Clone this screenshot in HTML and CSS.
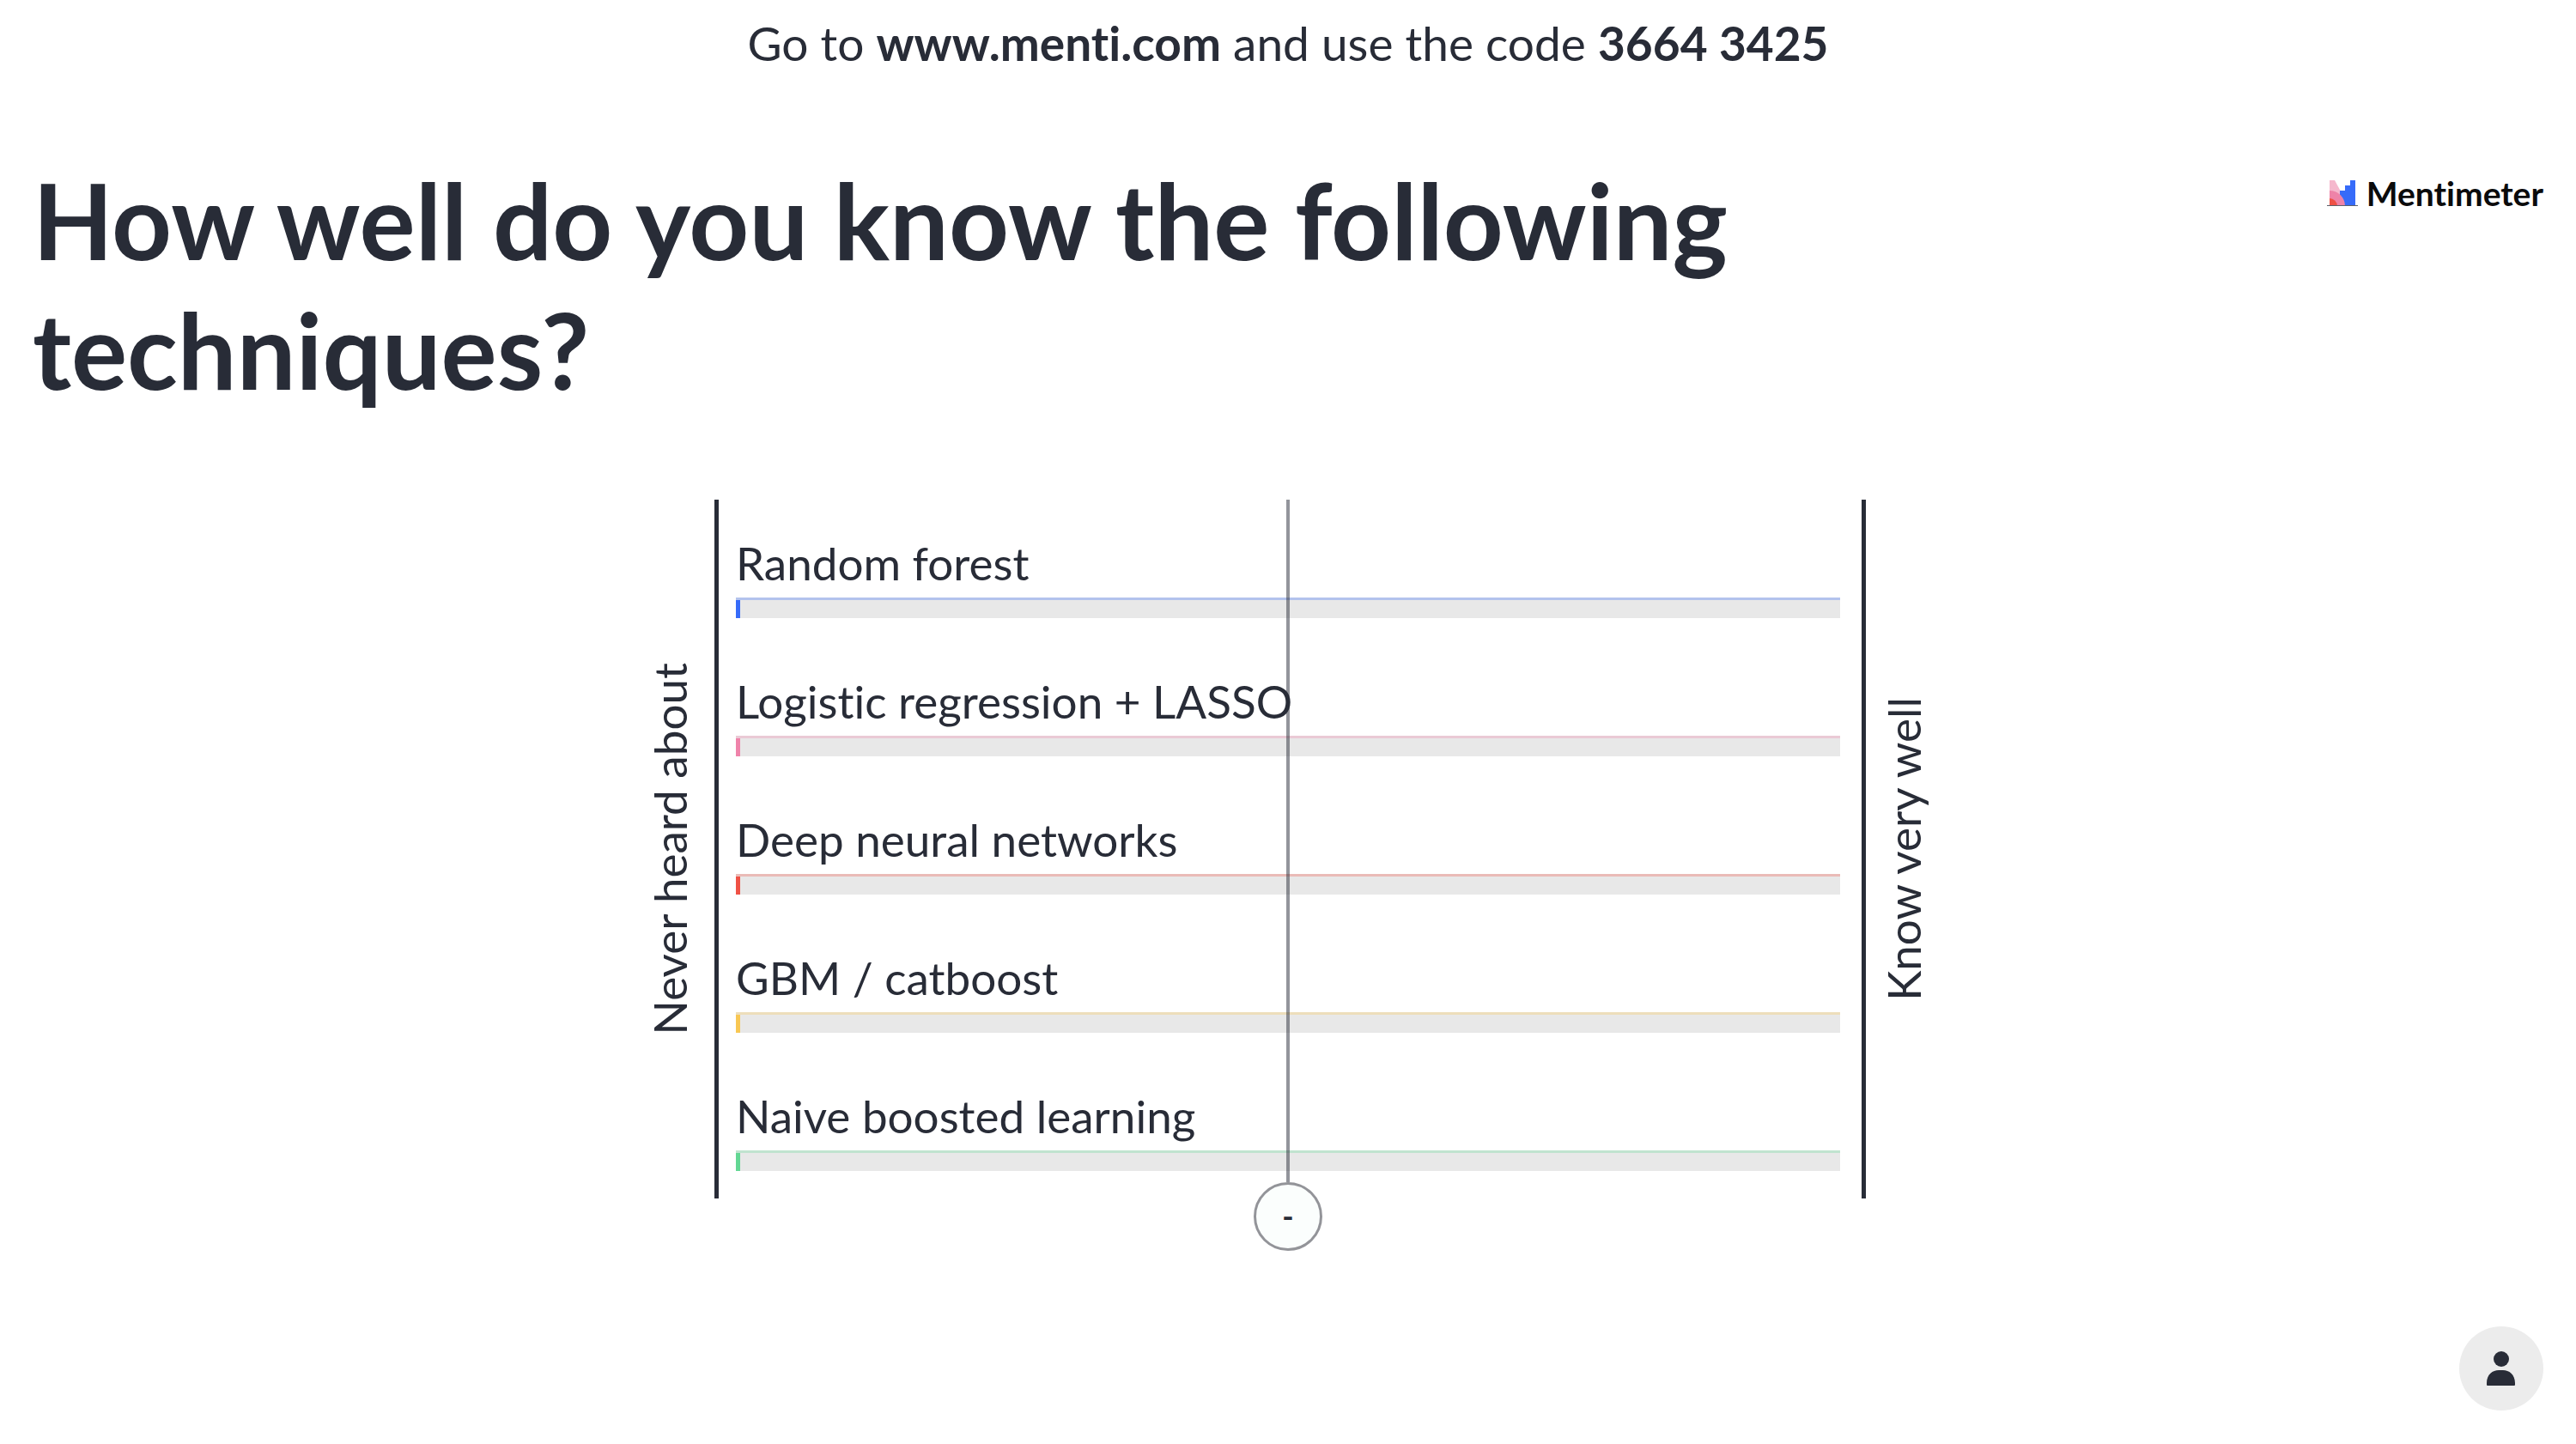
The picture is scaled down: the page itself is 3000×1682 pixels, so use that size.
FILE: index.html
```html
<!DOCTYPE html>
<html lang="en">
<head>
<meta charset="utf-8">
<meta name="viewport" content="width=device-width, initial-scale=1">
<title>Mentimeter</title>
<link rel="stylesheet" href="styles.css">
</head>
<body>
<p class="join">Go to <a class="join-link" href="https://www.menti.com">www.menti.com</a> and use the code <strong>3664 3425</strong></p>

<header class="header">
  <h1 class="question">How well do you know the following techniques?</h1>
  <div class="brand">
    <svg class="brand-mark" viewBox="0 0 36 31" aria-hidden="true">
      <path fill="#f5b8cd" d="M3 0h6l7 13v17H3z"/>
      <path fill="#366bf9" d="M15 12h6V6h6V0h6v30H15z"/>
      <path fill="#ee83a8" d="M3 12a18 18 0 0 1 18 18H3z"/>
      <path fill="#ef5145" d="M3 21a9 9 0 0 1 9 9H3z"/>
      <path fill="#5d6069" d="M0 29h36v1H0z"/>
    </svg>
    <span class="brand-name">Mentimeter</span>
  </div>
</header>

<main class="chart">
  <div class="axis axis-low">Never heard about</div>
  <div class="plot">
    <ul class="rows">
      <li class="row blue"><span class="label">Random forest</span><div class="bar"></div></li>
      <li class="row pink"><span class="label">Logistic regression + LASSO</span><div class="bar"></div></li>
      <li class="row red"><span class="label">Deep neural networks</span><div class="bar"></div></li>
      <li class="row yellow"><span class="label">GBM / catboost</span><div class="bar"></div></li>
      <li class="row green"><span class="label">Naive boosted learning</span><div class="bar"></div></li>
    </ul>
    <div class="average"><span class="average-value">-</span></div>
  </div>
  <div class="axis axis-high">Know very well</div>
</main>

<footer class="footer">
  <button class="people" type="button" aria-label="Participants">
    <svg class="people-icon" viewBox="0 0 34 40" aria-hidden="true">
      <circle cx="17" cy="9" r="9"/>
      <path d="M0 40v-3C0 27 7 22 14 22h5c7 0 14 5 14 15v2a1 1 0 0 1-1 1H1a1 1 0 0 1-1-1z"/>
    </svg>
  </button>
</footer>
</body>
</html>
```
FILE: styles.css
```css
* {
  box-sizing: border-box;
}

body {
  display: flex;
  flex-direction: column;
  min-height: 100vh;
  margin: 0;
  background: #fff;
  color: #282c37;
  font-family: Lato, "Liberation Sans", sans-serif;
  font-variant-ligatures: none;
}

.join {
  margin: 0;
  padding: 20px 40px 0;
  font-size: 55px;
  line-height: 60px;
  text-align: center;
}

.join strong,
.join-link {
  color: inherit;
  font-weight: 700;
  text-decoration: none;
}

.header {
  display: flex;
  justify-content: space-between;
  align-items: flex-start;
  gap: 40px;
  padding: 101px 38px 0;
}

.question {
  max-width: 2200px;
  margin: 0;
  font-size: 122px;
  line-height: 151px;
  font-weight: 700;
}

.brand {
  display: flex;
  align-items: center;
  gap: 10px;
  margin-top: 19px;
  color: #0b0b0c;
}

.brand-mark {
  width: 36px;
  height: 31px;
}

.brand-name {
  font-size: 39px;
  line-height: 50px;
  font-weight: 700;
}

.chart {
  display: grid;
  grid-template-columns: 1fr minmax(0, 1341px) 1fr;
  align-items: center;
  margin-top: 99px;
  padding-left: 5px;
}

.axis {
  font-size: 53px;
  line-height: 64px;
  writing-mode: vertical-rl;
  transform: rotate(180deg);
}

.axis-low {
  justify-self: end;
  padding-left: 20px;
}

.axis-high {
  justify-self: start;
  padding-right: 12px;
}

.plot {
  position: relative;
  padding: 42px 25px 32px 20px;
  border: solid #282c37;
  border-width: 0 5px;
}

.rows {
  display: flex;
  flex-direction: column;
  gap: 65px;
  margin: 0;
  padding: 0;
  list-style: none;
}

.row {
  display: flex;
  flex-direction: column;
  gap: 8px;
}

.label {
  font-size: 53px;
  line-height: 64px;
}

.bar {
  height: 24px;
  border-top: 3px solid color-mix(in srgb, var(--tone) 30%, #e8e8e8);
  background: linear-gradient(to right, var(--tone) 5px, #e8e8e8 5px);
}

.blue { --tone: #366bf9; }
.pink { --tone: #ef83aa; }
.red { --tone: #ef5145; }
.yellow { --tone: #f8c753; }
.green { --tone: #62d793; }

/* Average marker: a line across the rows that ends in a round badge */
.average {
  position: absolute;
  inset: 0 25px 19px 20px;
  display: flex;
  justify-content: center;
}

.average::before {
  content: "";
  width: 4px;
  background: #282c37;
  opacity: 0.5;
}

.average-value {
  position: absolute;
  top: 100%;
  width: 80px;
  height: 80px;
  border: 3px solid #939499;
  border-radius: 50%;
  background: #fbfefd;
  font-size: 36px;
  line-height: 72px;
  font-weight: 700;
  text-align: center;
}

.footer {
  display: flex;
  justify-content: flex-end;
  margin-top: auto;
  padding: 0 38px 39px;
}

.people {
  display: grid;
  place-items: center;
  width: 98px;
  height: 98px;
  padding: 0;
  border: 0;
  border-radius: 50%;
  background: #ececec;
  cursor: pointer;
}

.people-icon {
  width: 34px;
  height: 40px;
  fill: #282c37;
}
```
